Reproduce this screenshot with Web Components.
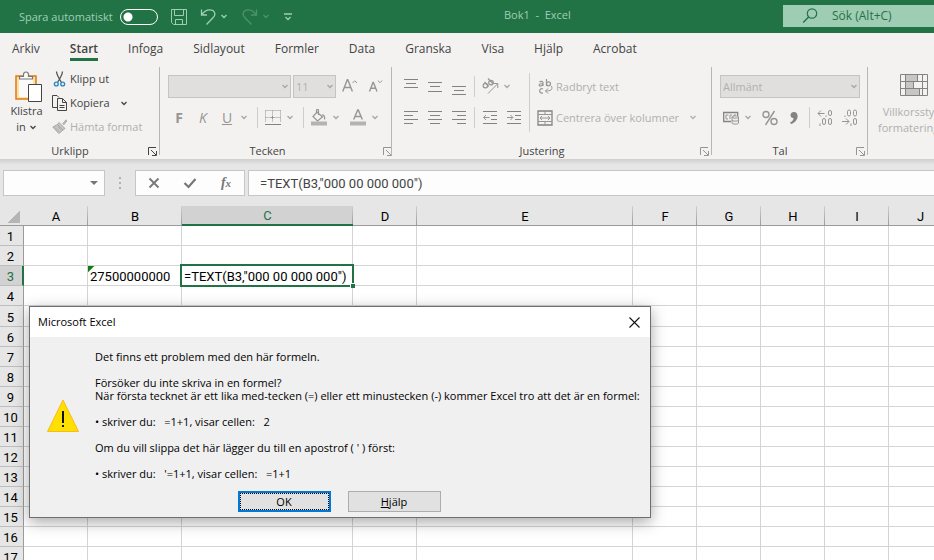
<!DOCTYPE html>
<html lang="sv">
<head>
<meta charset="utf-8">
<title>Bok1 - Excel</title>
<style>
html, body { margin: 0; height: 100%; }
body { font: 11px/16px "Open Sans", "Noto Sans", sans-serif; color: #444; overflow: hidden; background: #e6e6e6; }
</style>
</head>
<body>
<excel-window></excel-window>
<script>
const define = (name, template, setup) => {
  const t = document.createElement('template');
  t.innerHTML = template;
  customElements.define(name, class extends HTMLElement {
    constructor() {
      super();
      this.attachShadow({ mode: 'open' }).append(t.content.cloneNode(true));
    }
    connectedCallback() {
      if (setup && !this.ready) { this.ready = true; setup(this, this.shadowRoot); }
    }
  });
};

const icons = {
  save: [16, 16, '<path d="M.5.5h15v15h-13l-2-2zM3.500.5v6h9v-6M4.500 15.500v-5h7v5" fill="none" stroke="currentColor"/>'],
  undo: [16, 16, '<path d="M1.500.5v5.500h5.500M1.500 6C4 2.500 6.500.8 9.500.8c6 0 6.500 5.200 3.500 8L6.500 15.500" fill="none" stroke="currentColor" stroke-width="1.300"/>'],
  redo: [16, 16, '<path d="M14.500.5v5.500H9M14.500 6C12 2.500 9.500.8 6.500.8c-6 0-6.500 5.200-3.500 8L9.500 15.500" fill="none" stroke="currentColor" stroke-width="1.300"/>'],
  down: [8, 5, '<path d="M1.500 1l2.500 2.500L6.500 1" fill="none" stroke="currentColor" stroke-width="1.300"/>'],
  custom: [8, 8, '<path d="M0 1h8M1.500 4l2.500 2.500L6.500 4" fill="none" stroke="currentColor" stroke-width="1.300"/>'],
  search: [16, 16, '<circle cx="10" cy="5.500" r="4.700" fill="none" stroke="currentColor" stroke-width="1.200"/><path d="M6.600 9L1.200 14.500" stroke="currentColor" stroke-width="1.400"/>'],
  paste: [28, 31, '<path d="M1 5h20v23H1z" fill="#fce2a5" stroke="#e07a10" stroke-width="1.500"/><path d="M4 8h14v18H4z" fill="#fafafa"/><path d="M4.500 8V5.500h4C8 2 9.500 1 11 1s3 1 2.500 4.500h4V8z" fill="#fafafa" stroke="#777" stroke-width="1.200"/><path d="M13.500 13.500h13v17h-13z" fill="#fff" stroke="#444"/>'],
  cut: [15, 16, '<path d="M4.500.5c.2 3 1.500 5.500 5 11M10.500.5c-.2 3-1.500 5.500-5 11" fill="none" stroke="#555" stroke-width="1.300"/><circle cx="4.300" cy="13" r="1.900" fill="none" stroke="#2b88c8" stroke-width="1.400"/><circle cx="10.700" cy="13" r="1.900" fill="none" stroke="#2b88c8" stroke-width="1.400"/>'],
  copy: [15, 16, '<path d="M5 12.500H.5V.5H5L7 2.500M5.500 3.500h5l4 4v8h-9zM10.500 3.500v4h4M7.500 10.500h5M7.500 12.500h5" fill="none" stroke="#444"/>'],
  brush: [15, 16, '<path d="M10.500 5L14 .8l1 1L11.500 6M7 3.500l6 6-2 1.500-5.500-5.500zM5.500 5.500L.8 8l6 6.500 4.200-3.500M3 8.500l4 4M6 7.500l2.500 3" fill="#c8c6c4" stroke="#a8a6a4"/>'],
  grow: [16, 16, '<path d="M.7 12.500L5.300.8h.5l4.600 11.700M2.300 8.500h6.600" fill="none" stroke="#979593" stroke-width="1.400"/><path d="M10.500 4l2.200-2.200L15 4" fill="none" stroke="#979593"/>'],
  shrink: [16, 16, '<path d="M1.500 12.500L5 3.500h.4L9 12.500M2.800 9.300h5" fill="none" stroke="#979593" stroke-width="1.400"/><path d="M9.800 1.500L12 3.700l2.200-2.200" fill="none" stroke="#979593"/>'],
  border: [16, 16, '<path d="M.5.5v12M15.500.5v12M7.500.5v12M.5.5h15M.5 7.500h15" fill="none" stroke="#979593" stroke-dasharray="1 1"/><path d="M6 7.500h3M7.500 6v3" stroke="#979593"/><path d="M0 14.500h16" stroke="#858381"/>'],
  fill: [18, 17, '<path d="M7 3l5.500 5-5 4L3 7.500zM6.500 4.500V1.500c0-1.500 2-1.500 2 0V6M12 6c2-.5 3 2 2.500 4.500" fill="none" stroke="#979593" stroke-width="1.200"/><path d="M1 12.500h16v4H1z" fill="#b5b3b1"/>'],
  fontcolor: [16, 17, '<path d="M3.700 10.500L7.700 1h.6l4 9.500M5.200 7.500h5.600" fill="none" stroke="#979593" stroke-width="1.400"/><path d="M0 12.500h16v4H0z" fill="#b5b3b1"/>'],
  atop: [14, 20, '<path d="M0 2.500h14M2 6.500h10M0 10.500h14" stroke="#858381"/>'],
  amid: [14, 20, '<path d="M0 5.500h14M2 9.500h10M0 14.500h14" stroke="#858381"/>'],
  abot: [14, 20, '<path d="M0 9.500h14M2 13.500h10M0 17.500h14" stroke="#858381"/>'],
  left: [14, 14, '<path d="M0 .5h14M0 4.500h9M0 8.500h14M0 12.500h9" stroke="#858381"/>'],
  center: [14, 14, '<path d="M0 .5h14M2 4.500h10M0 8.500h14M2 12.500h10" stroke="#858381"/>'],
  right: [14, 14, '<path d="M0 .5h14M5 4.500h9M0 8.500h14M5 12.500h9" stroke="#858381"/>'],
  outdent: [14, 14, '<path d="M0 .5h14M8 4.500h6M8 8.500h6M0 12.500h14" stroke="#858381"/><path d="M6.500 6.500H.8M3 4L.6 6.500 3 9" fill="none" stroke="#979593"/>'],
  indent: [14, 14, '<path d="M0 .5h14M8 4.500h6M8 8.500h6M0 12.500h14" stroke="#858381"/><path d="M0 6.500h5.700M3.500 4l2.400 2.500L3.500 9" fill="none" stroke="#979593"/>'],
  orient: [17, 17, '<g fill="none" stroke="#979593" stroke-width="1.200"><circle cx="3.400" cy="7.600" r="2.300"/><path d="M2.500 3.800l4.200 4.700M6 .5l5.400 5.500"/><circle cx="9" cy="4.600" r="2.300"/><path d="M6 15.500L15.500 6M11.500 5.500h4.300V10" stroke-width="1"/></g>'],
  wrap: [15, 17, '<g fill="none" stroke="#979593" stroke-width="1.200"><path d="M1.500 4c1-1 3.500-1 3.500 1v3M5 5.500c-5 0-4.500 3-2 2.500C4.500 7.500 5 7 5 6M8.500 1v7M5 11c-4-2-5 5 0 4"/><circle cx="10.500" cy="5.800" r="2"/><path d="M13.500 8c1.500 4-1 5-6 5M10 10.500L7.500 13l2.500 2.500" stroke-width="1"/></g>'],
  merge: [16, 16, '<path d="M1 1h14v14H1z" fill="none" stroke="#858381" stroke-width="1.300"/><path d="M1 4.500h14M1 11.500h14M8 1v3.500M8 11.500V15M3 8h10M5 6L3 8l2 2M11 6l2 2-2 2" fill="none" stroke="#979593"/>'],
  currency: [17, 14, '<path d="M8 10.500H.7V1.500h14V5" fill="none" stroke="#858381" stroke-width="1.300"/><path d="M5.500 4H3v4h2M7 8V4h2M11 6V4h2" fill="none" stroke="#979593"/><path d="M9 6v6c0 1.500 6.500 1.500 6.500 0V6C15.500 4.500 9 4.500 9 6c0 1.500 6.500 1.500 6.500 0M9 9c0 1.500 6.500 1.500 6.500 0" fill="#eee" stroke="#979593"/>'],
  percent: [16, 16, '<g fill="none" stroke="#979593" stroke-width="1.400"><circle cx="4" cy="4.500" r="3"/><circle cx="12" cy="11.500" r="3"/><path d="M12.500 1L3.500 15"/></g>'],
  comma: [10, 14, '<path d="M1.500 4a3.500 3.500 0 0 1 3.500-3c5 0 5.500 9-3 12L1 11.500c3-1.500 3.500-3 3.500-4.300C2.500 7 1.500 5.800 1.500 4z" fill="#858381"/>'],
  moredec: [17, 17, '<g fill="none" stroke="#979593"><path d="M7.500 4.500H1M4 1.500L1 4.500l3 3M9 6.500V8"/><rect x="11.500" y="1.500" width="3" height="5" rx="1.500"/><rect x="5.500" y="9.500" width="3" height="6" rx="1.500"/><rect x="11.500" y="9.500" width="3" height="6" rx="1.500"/><path d="M3 14.500V17"/></g>'],
  lessdec: [17, 17, '<g fill="none" stroke="#979593"><path d="M1 12.500h7M5 9.500l3 3-3 3M10 14.500V17M4 6.500V8"/><rect x="12.500" y="9.500" width="3" height="6" rx="1.500"/><rect x="6.500" y="1" width="3" height="6" rx="1.500"/><rect x="12.500" y="1" width="3" height="6" rx="1.500"/></g>'],
  cond: [28, 22, '<path d="M5.500 1h12v7h-12zM5.500 8h8v7h-8zM5.500 15h14v6h-14z" fill="#c8c6c4"/><path d="M.5.5h27v21H.5zM.5 7.500h27M.5 14.500h27M5.500.5v21M22.500.5v21M17.500.5v7M13.500 7.500v7M19.500 14.500v7" fill="none" stroke="#858381"/>'],
  launch: [9, 9, '<path d="M.5 8V.5H8M3 3l5 5M8.500 4v4.500H4" fill="none" stroke="currentColor"/>'],
  cancel: [12, 12, '<path d="M1.500 1.500l9 9M10.500 1.500l-9 9" stroke="#777" stroke-width="1.800"/>'],
  check: [14, 12, '<path d="M1.500 6l4 4 7-8" fill="none" stroke="#777" stroke-width="2.200"/>'],
  tri: [8, 4, '<path d="M0 0h8L4 4z" fill="#777"/>'],
  close: [11, 11, '<path d="M.5.5l10 10M10.500.5l-10 10" stroke="#111" stroke-width="1.100"/>'],
  warn: [32, 33, '<path d="M16 1L31.500 32.500H.5z" fill="#ffe000" stroke="#fbb91c"/><path d="M15 12h2v12h-2zM15 26h2v2h-2z" fill="#111"/>']
};

define('ui-icon', `<style>:host { display: block; flex: none; } svg { display: block; }</style>`, (el, root) => {
  const [w, h, body] = icons[el.getAttribute('name')];
  const box = document.createElement('div');
  box.innerHTML = `<svg width="${w}" height="${h}" viewBox="0 0 ${w} ${h}" aria-hidden="true">${body}</svg>`;
  root.append(box);
});

define('tool-button', `<style>
:host { display: block; flex: none; }
button { all: unset; box-sizing: border-box; width: 24px; height: 22px; display: flex; align-items: center; justify-content: center; gap: 3px; white-space: nowrap; font-size: 14px; color: #979593; }
:host([kind=arrow]) button { width: 15px; justify-content: flex-start; padding-left: 1px; color: #a8a6a4; }
:host([kind=text]) button { width: auto; height: 24px; color: inherit; font-size: 11px; }
:host([kind=tall]) button { width: auto; height: auto; flex-direction: column; color: inherit; font-size: 11px; gap: 0; }
</style><button><slot></slot></button>`, (el, root) => {
  if (el.hasAttribute('label')) root.querySelector('button').setAttribute('aria-label', el.getAttribute('label'));
});

define('combo-box', `<style>
:host { display: grid; align-items: center; color: #b1afad; }
select { grid-area: 1/1; appearance: none; width: 100%; height: 23px; box-sizing: border-box; border: 1px solid #c6c4c2; border-radius: 0; background: #e1dfdd; color: inherit; opacity: 1; font: inherit; padding: 0 2px; margin: 0; }
ui-icon { grid-area: 1/1; justify-self: end; margin-right: 2px; color: #a8a6a4; }
</style><select disabled><option></option></select><ui-icon name="down"></ui-icon>`, (el, root) => {
  root.querySelector('option').textContent = el.getAttribute('value');
  root.querySelector('select').setAttribute('aria-label', el.getAttribute('label'));
});

define('ribbon-group', `<style>
:host { display: grid; grid-template-rows: 1fr 16px; box-sizing: border-box; position: relative; }
:host::after { content: ""; position: absolute; right: 0; top: 1px; bottom: 4px; width: 1px; background: #b8b6b4; }
footer { display: grid; grid-template-columns: 1fr 20px; text-align: center; color: #444; }
button { all: unset; display: grid; align-items: center; justify-content: end; padding-right: 3px; color: var(--launch, #979593); }
</style><slot></slot><footer><span></span><button><ui-icon name="launch"></ui-icon></button></footer>`, (el, root) => {
  root.querySelector('span').textContent = el.getAttribute('label');
  root.querySelector('button').setAttribute('aria-label', 'Visa ' + el.getAttribute('label'));
});

define('title-bar', `<style>
:host { display: grid; grid-template-columns: auto 1fr 151px; height: 33px; align-items: center; background: #217346; color: #a0ceb5; }
.quick { display: flex; align-items: center; padding-left: 19px; height: 30px; }
label { display: flex; align-items: center; gap: 7px; white-space: nowrap; }
input[type=checkbox] { appearance: none; box-sizing: border-box; width: 38px; height: 16px; margin: 0 13px 0 0; border: 1px solid #fff; border-radius: 8px; background: radial-gradient(circle at 7px 7px, #fff 4px, transparent 5px); }
button { all: unset; display: flex; }
.save { margin-right: 13px; } .gap { margin: 0 14px 0 4px; } .off { opacity: .35; }
.title { white-space: pre; line-height: 30px; align-self: start; text-align: center; }
.search { height: 22px; margin-bottom: 1px; display: flex; align-items: center; background: #9fcdb3; color: #217346; box-sizing: border-box; padding-left: 19px; gap: 14px; }
input[type=text] { flex: 1; min-width: 0; border: 0; padding: 0; background: none; font: inherit; font-size: 12px; color: inherit; }
input::placeholder { color: inherit; opacity: 1; }
</style>
<div class="quick"><label>Spara automatiskt <input type="checkbox" role="switch"></label>
<button class="save" aria-label="Spara"><ui-icon name="save"></ui-icon></button>
<button aria-label="Ångra"><ui-icon name="undo"></ui-icon></button><button class="gap" aria-label="Ångra flera"><ui-icon name="down"></ui-icon></button>
<button class="off" aria-label="Gör om"><ui-icon name="redo"></ui-icon></button><button class="gap off" aria-label="Gör om flera"><ui-icon name="down"></ui-icon></button>
<button aria-label="Anpassa"><ui-icon name="custom"></ui-icon></button></div>
<div class="title">Bok1  -  Excel</div>
<div class="search"><ui-icon name="search"></ui-icon><input type="text" aria-label="Sök" placeholder="Sök (Alt+C)"></div>`);

define('ribbon-tabs', `<style>
:host { display: block; background: #f3f2f1; height: 33px; }
nav { display: flex; gap: 30px; padding: 6px 12px 0; font-size: 12px; line-height: 19px; }
a { color: #444; text-decoration: none; border-bottom: 3px solid transparent; white-space: nowrap; }
a[aria-current] { font-weight: 600; border-color: #217346; }
</style><nav></nav>`, (el, root) => {
  root.querySelector('nav').innerHTML = 'Arkiv Start Infoga Sidlayout Formler Data Granska Visa Hjälp Acrobat'.split(' ')
    .map(t => `<a href="#${t}"${t === 'Start' ? ' aria-current="page"' : ''}>${t}</a>`).join('');
});

define('ribbon-bar', `<style>
:host { display: flex; height: 93px; background: #f3f2f1; overflow: hidden; }
ribbon-group { flex: none; }
.clip { width: 160px; --launch: #444; }
.font { width: 232px; } .align { width: 320px; } .number { width: 156px; }
.cols { display: flex; }
.side { display: flex; flex-direction: column; padding-top: 1px; align-items: flex-start; }
.paste { width: 42px; padding: 5px 0 0 10px; }
.row { display: flex; align-items: center; height: 23px; }
.rows { display: flex; flex-direction: column; gap: 8px; padding: 9px 7px 0; }
.font .row:first-child { padding-left: 1px; gap: 2px; }
.number .row:first-child { padding: 0 1px; }
hr { width: 1px; height: 21px; margin: 0 3px; border: 0; background: #d0cecc; flex: none; }
hr.tall { height: 59px; margin: 7px 5px 0 0; }
.align .rows { padding-right: 3px; }
.align .cmds { padding: 9px 0 0; color: #b1afad; }
.in { display: flex; align-items: center; gap: 3px; }
.dim { color: #b1afad; }
.more { padding: 8px 0 0 10px; flex: 1 0 56px; color: #b1afad; }
.more ui-icon[name=cond] { margin-bottom: 8px; }
.paste ui-icon[name=paste] { margin-left: 5px; padding-bottom: 1px; }
.arrow { margin-left: 7px; }
</style>
<ribbon-group class="clip" label="Urklipp"><div class="cols">
  <div class="paste"><tool-button kind="tall"><ui-icon name="paste"></ui-icon><span>Klistra</span><span class="in">in <ui-icon name="down"></ui-icon></span></tool-button></div>
  <div class="side">
    <tool-button kind="text"><ui-icon name="cut"></ui-icon>Klipp ut</tool-button>
    <tool-button kind="text"><ui-icon name="copy"></ui-icon>Kopiera<ui-icon class="arrow" name="down"></ui-icon></tool-button>
    <tool-button kind="text" class="dim"><ui-icon name="brush"></ui-icon>Hämta format</tool-button>
  </div></div></ribbon-group>
<ribbon-group class="font" label="Tecken"><div class="rows">
  <div class="row"><combo-box style="width:123px" label="Teckensnitt" value=""></combo-box><combo-box style="width:43px" label="Teckenstorlek" value="11"></combo-box>
    <tool-button label="Öka teckenstorlek"><ui-icon name="grow"></ui-icon></tool-button><tool-button label="Minska teckenstorlek"><ui-icon name="shrink"></ui-icon></tool-button></div>
  <div class="row"><tool-button><b>F</b></tool-button><tool-button><i>K</i></tool-button><tool-button><u>U</u></tool-button><tool-button kind="arrow" label="Understrykning"><ui-icon name="down"></ui-icon></tool-button><hr>
    <tool-button label="Kantlinjer"><ui-icon name="border"></ui-icon></tool-button><tool-button kind="arrow" label="Fler kantlinjer"><ui-icon name="down"></ui-icon></tool-button><hr>
    <tool-button label="Fyllningsfärg"><ui-icon name="fill"></ui-icon></tool-button><tool-button kind="arrow" label="Fler fyllningsfärger"><ui-icon name="down"></ui-icon></tool-button>
    <tool-button label="Teckenfärg"><ui-icon name="fontcolor"></ui-icon></tool-button><tool-button kind="arrow" label="Fler teckenfärger"><ui-icon name="down"></ui-icon></tool-button></div>
</div></ribbon-group>
<ribbon-group class="align" label="Justering"><div class="cols"><div class="rows">
  <div class="row"><tool-button label="Överst"><ui-icon name="atop"></ui-icon></tool-button><tool-button label="Mitten"><ui-icon name="amid"></ui-icon></tool-button><tool-button label="Nederst"><ui-icon name="abot"></ui-icon></tool-button><hr>
    <tool-button label="Orientering"><ui-icon name="orient"></ui-icon></tool-button><tool-button kind="arrow" label="Fler orienteringar"><ui-icon name="down"></ui-icon></tool-button></div>
  <div class="row"><tool-button label="Vänster"><ui-icon name="left"></ui-icon></tool-button><tool-button label="Centrera"><ui-icon name="center"></ui-icon></tool-button><tool-button label="Höger"><ui-icon name="right"></ui-icon></tool-button><hr>
    <tool-button label="Minska indrag"><ui-icon name="outdent"></ui-icon></tool-button><tool-button label="Öka indrag"><ui-icon name="indent"></ui-icon></tool-button></div>
  </div><hr class="tall"><div class="rows cmds">
  <div class="row"><tool-button kind="text"><ui-icon name="wrap" style="padding:0 0 0 3px"></ui-icon>Radbryt text</tool-button></div>
  <div class="row"><tool-button kind="text"><ui-icon name="merge" style="padding:0 0 0 2px"></ui-icon>Centrera över kolumner<ui-icon class="arrow" name="down"></ui-icon></tool-button></div>
</div></div></ribbon-group>
<ribbon-group class="number" label="Tal"><div class="rows">
  <div class="row"><combo-box style="flex:1" label="Talformat" value="Allmänt"></combo-box></div>
  <div class="row"><tool-button label="Valuta"><ui-icon name="currency"></ui-icon></tool-button><tool-button kind="arrow" label="Fler valutor"><ui-icon name="down"></ui-icon></tool-button><tool-button label="Procent"><ui-icon name="percent"></ui-icon></tool-button><tool-button label="Tusental"><ui-icon name="comma"></ui-icon></tool-button><hr>
    <tool-button label="Öka decimal"><ui-icon name="moredec"></ui-icon></tool-button><tool-button label="Minska decimal"><ui-icon name="lessdec"></ui-icon></tool-button></div>
</div></ribbon-group>
<div class="more"><tool-button kind="tall"><ui-icon name="cond"></ui-icon><span>Villkorsstyrd</span><span class="in">formatering <ui-icon name="down"></ui-icon></span></tool-button></div>`);

define('formula-bar', `<style>
:host { display: flex; padding: 11px 0 10px 3px; background: linear-gradient(#cfcfcf, #e6e6e6 6px); }
.box { box-sizing: border-box; height: 26px; border: 1px solid #c6c6c6; background: #fdfdfd; display: flex; align-items: center; }
.name { width: 102px; padding-right: 6px; }
input { flex: 1; min-width: 0; width: 100%; border: 0; background: none; padding: 0; font: 13px Roboto, sans-serif; color: #444; outline: 0; }
.grip { width: 30px; display: grid; place-content: center; gap: 3px; }
.grip i { width: 2px; height: 2px; background: #b0b0b0; }
.acts { width: 110px; margin-right: 3px; justify-content: space-around; }
button { all: unset; display: grid; place-items: center; width: 30px; height: 20px; }
.fx { font: italic 700 14px "Liberation Serif", serif; color: #777; }
.fx small { font-size: 11px; }
.formula { flex: 1; border-right: 0; padding-left: 11px; }
</style>
<div class="box name"><input aria-label="Namnruta"><ui-icon name="tri"></ui-icon></div>
<div class="grip"><i></i><i></i><i></i></div>
<div class="box acts"><button aria-label="Avbryt"><ui-icon name="cancel"></ui-icon></button><button aria-label="Ange"><ui-icon name="check"></ui-icon></button><button class="fx"><span>f<small>x</small></span></button></div>
<div class="box formula"><input aria-label="Formelfält"></div>`, (el, root) => {
  root.querySelector('.formula input').value = '=TEXT(B3,"000 00 000 000")';
});

define('work-sheet', `<style>
:host { display: block; overflow: hidden; background: #fff; color: #000; font: 13px/17px Roboto, sans-serif; }
table { table-layout: fixed; width: 952px; border-collapse: separate; border-spacing: 0; }
th, td { box-sizing: border-box; height: 20px; padding: 2px 0 0 2px; border: 0 solid #d4d4d4; border-width: 0 1px 1px 0; white-space: pre; text-align: left; font-weight: 400; }
thead th { padding: 1px 0 0; text-align: center; background: #e6e6e6; border-bottom-color: #9b9b9b; border-right: 0; background-image: linear-gradient(#d0d0d0, #9b9b9b); background-size: 1px 100%; background-position: right; background-repeat: no-repeat; }
tbody th { padding: 2px 2px 0 0; text-align: center; background: #e6e6e6; border-color: #9b9b9b; border-bottom-color: #bdbdbd; }
thead th.on { background-color: #d2d2d2; color: #217346; border-bottom: 2px solid #217346; padding: 0; }
tbody th.on { background: #d2d2d2; color: #217346; border-right: 2px solid #217346; padding-right: 1px; }
tr.five > * { height: 21px; }
td.err { background: linear-gradient(135deg, #107c10 4px, transparent 5px); }
td.edit { position: relative; }
td.edit::before { content: ""; position: absolute; inset: -2px; border: 2px solid #217346; }
td.edit::after { content: ""; position: absolute; right: -3px; bottom: -3px; width: 4px; height: 4px; background: #217346; border: solid #fff; border-width: 1px 0 0 1px; }
.corner { background: linear-gradient(to bottom right, transparent 50%, #b5b5b5 50%) 8px 5px/12px 12px no-repeat, #e6e6e6; }
</style><table><colgroup></colgroup><thead></thead><tbody></tbody></table>`, (el, root) => {
  const widths = [24, 64, 94, 171, 64, 216, 64, 64, 64, 64, 63];
  const letters = 'ABCDEFGHIJ'.split('');
  const values = { B3: '27500000000', C3: '=TEXT(B3,"000 00 000 000")' };
  const kinds = { B3: 'err', C3: 'edit' };
  root.querySelector('colgroup').innerHTML = widths.map(w => `<col style="width:${w}px">`).join('');
  root.querySelector('thead').innerHTML = '<tr><th class="corner"></th>' + letters.map(l => `<th scope="col" class="${l === 'C' ? 'on' : ''}">${l}</th>`).join('') + '</tr>';
  let rows = '';
  for (let n = 1; n <= 17; n++) {
    rows += `<tr class="${n === 5 ? 'five' : ''}"><th scope="row" class="${n === 3 ? 'on' : ''}">${n}</th>` +
      letters.map(l => `<td class="${kinds[l + n] || ''}">${values[l + n] || ''}</td>`).join('') + '</tr>';
  }
  root.querySelector('tbody').innerHTML = rows;
});

define('message-box', `<style>
:host { display: block; box-sizing: border-box; width: 622px; border: 1px solid #6e6e6e; background: #f0f0f0; color: #000; box-shadow: 0 4px 14px rgba(0,0,0,.35); }
header { display: flex; align-items: center; justify-content: space-between; height: 30px; padding: 0 10px 0 8px; background: #fff; }
button { all: unset; }
.body { display: flex; align-items: center; gap: 16px; padding: 13px 0 11px 17px; line-height: 13px; white-space: pre; }
footer { display: flex; justify-content: center; gap: 17px; padding: 0 2px 5px 0; }
footer button { box-sizing: border-box; width: 93px; height: 21px; border: 1px solid #adadad; background: #e1e1e1; text-align: center; line-height: 19px; }
footer .ok { border: 2px solid #0078d7; line-height: 17px; outline: 1px dotted #000; outline-offset: -3px; }
</style>
<header><span>Microsoft Excel</span><button aria-label="Stäng"><ui-icon name="close"></ui-icon></button></header>
<div class="body"><ui-icon name="warn"></ui-icon><div class="text"><slot></slot></div></div>
<footer><button class="ok">OK</button><button><u>H</u>jälp</button></footer>`);

define('excel-window', `<style>
:host { display: flex; flex-direction: column; height: 100vh; overflow: hidden; position: relative; }
title-bar, ribbon-tabs, ribbon-bar, formula-bar { flex: none; }
work-sheet { flex: 1; min-height: 0; }
message-box { position: absolute; left: 29px; top: 306px; }
</style>
<title-bar></title-bar><ribbon-tabs></ribbon-tabs><ribbon-bar></ribbon-bar><formula-bar></formula-bar><work-sheet></work-sheet>
<message-box role="dialog" aria-label="Microsoft Excel">Det finns ett problem med den här formeln.

Försöker du inte skriva in en formel?
När första tecknet är ett lika med-tecken (=) eller ett minustecken (-) kommer Excel tro att det är en formel:

• skriver du:   =1+1, visar cellen:   2

Om du vill slippa det här lägger du till en apostrof ( ' ) först:

• skriver du:   '=1+1, visar cellen:   =1+1</message-box>`);
</script>
</body>
</html>
